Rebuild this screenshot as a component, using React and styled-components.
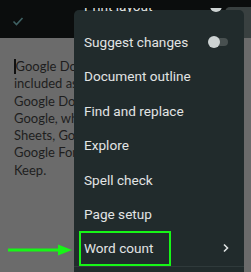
import React from "react";
import styled, { createGlobalStyle } from "styled-components";

const Global = createGlobalStyle`
  html, body { margin: 0; padding: 0; }
  body { width: 251px; height: 272px; overflow: hidden; background: #6b6b6b; }
`;

const Screen = styled.div`
  position: relative;
  width: 251px;
  height: 272px;
  overflow: hidden;
  background: #6b6b6b;
  display: flex;
  flex-direction: column;
`;

const TopBar = styled.div`
  height: 38px;
  flex: none;
  background: #0b0d0d;
  display: flex;
  align-items: flex-start;
  justify-content: space-between;
  padding-left: 12px;
  box-sizing: border-box;
`;

const CheckWrap = styled.div`
  margin-top: 13px;
  width: 12px;
  height: 12px;
`;

const GhostButton = styled.div`
  margin-top: 7px;
  width: 26px;
  height: 31px;
  background: #394040;
  border-radius: 5px 0 0 0;
`;

const Doc = styled.div`
  padding: 20px 0 0 14px;
  font-family: Lato, "Open Sans", sans-serif;
  font-size: 13px;
  line-height: 17.3px;
  color: #1e1e1e;
`;

const Line = styled.div`
  white-space: nowrap;
  width: 60px;
  overflow: hidden;
`;

const Caret = styled.span`
  display: inline-block;
  width: 1.5px;
  height: 15px;
  background: #111;
  vertical-align: -3px;
`;

const Menu = styled.div`
  position: absolute;
  left: 74px;
  top: 10px;
  width: 170px;
  height: 280px;
  background: #212b2c;
  border-radius: 5px 5px 0 0;
  font-family: Roboto, sans-serif;
  font-size: 13.6px;
  color: #e2e4e4;
`;

const List = styled.div`
  margin-top: -19.6px;
  display: flex;
  flex-direction: column;
`;

const Item = styled.div`
  height: 34.4px;
  display: flex;
  align-items: center;
  justify-content: space-between;
  padding: 0 14px 0 10px;
  box-sizing: border-box;
  visibility: ${(p) => (p.$hidden ? "hidden" : "visible")};
`;

const Toggle = styled.div`
  position: relative;
  width: 20px;
  height: 12px;
  margin-right: 2px;
`;

const Track = styled.div`
  position: absolute;
  left: 4px;
  top: 2px;
  width: 16px;
  height: 8px;
  border-radius: 4px;
  background: #485050;
`;

const Knob = styled.div`
  position: absolute;
  left: 0;
  top: 0;
  width: 12px;
  height: 12px;
  border-radius: 50%;
  background: #cdd3d3;
`;

const Divider = styled.div`
  height: 1px;
  background: #2f3a3b;
`;

const Highlight = styled.div`
  position: absolute;
  left: 79px;
  top: 231px;
  width: 92px;
  height: 35px;
  box-sizing: border-box;
  border: 2.5px solid #17f517;
`;

const Arrow = styled.svg`
  position: absolute;
  left: 6px;
  top: 243px;
`;

const TopCover = styled.div`
  position: absolute;
  left: 74px;
  top: 8px;
  width: 170px;
  height: 4px;
  overflow: hidden;
  pointer-events: none;
`;

const TopText = styled.div`
  position: absolute;
  left: 10px;
  top: -10px;
  font-family: Roboto, sans-serif;
  font-size: 13.6px;
  line-height: 16px;
  white-space: nowrap;
  color: #e2e4e4;
`;

const TopKnob = styled.div`
  position: absolute;
  left: 136px;
  top: -8px;
  width: 12px;
  height: 12px;
  border-radius: 50%;
  background: #cdd3d3;
`;

function Check() {
  return (
    <svg width="12" height="12" viewBox="0 0 12 12">
      <path d="M1.5 6.5 L4.5 9.5 L10.5 3" fill="none" stroke="#3f6163" strokeWidth="1.6" />
    </svg>
  );
}

function Chevron() {
  return (
    <svg width="8" height="10" viewBox="0 0 8 10">
      <path d="M2 1.5 L5.5 5 L2 8.5" fill="none" stroke="#dfe3e3" strokeWidth="1.6" />
    </svg>
  );
}

const items = [
  { label: "Print layout", toggle: true, hidden: true },
  { label: "Suggest changes", toggle: true },
  { label: "Document outline" },
  { label: "Find and replace" },
  { label: "Explore" },
  { label: "Spell check" },
  { label: "Page setup" },
  { label: "Word count", chevron: true },
];

export default function App() {
  return (
    <>
      <Global />
      <Screen>
        <TopBar>
          <CheckWrap>
            <Check />
          </CheckWrap>
          <GhostButton />
        </TopBar>
        <Doc>
          <Line>
            <Caret />Google Docs is
          </Line>
          <Line>included as part</Line>
          <Line>Google Docs Editors</Line>
          <Line>Google, which also</Line>
          <Line>Sheets, Google Slides,</Line>
          <Line>Google Forms and</Line>
          <Line>Keep.</Line>
        </Doc>
        <Menu>
          <List>
            {items.map((it) => (
              <Item key={it.label} $hidden={it.hidden}>
                <span>{it.label}</span>
                {it.toggle && (
                  <Toggle>
                    <Track />
                    <Knob />
                  </Toggle>
                )}
                {it.chevron && <Chevron />}
              </Item>
            ))}
          </List>
          <Divider />
        </Menu>
        <TopCover>
          <TopText>Print layout</TopText>
          <TopKnob />
        </TopCover>
        <Highlight />
        <Arrow width="68" height="14" viewBox="0 0 68 14">
          <line x1="2" y1="7" x2="54" y2="7" stroke="#17f517" strokeWidth="3" />
          <polygon points="52,1.5 66,7 52,12.5" fill="#17f517" />
        </Arrow>
      </Screen>
    </>
  );
}
